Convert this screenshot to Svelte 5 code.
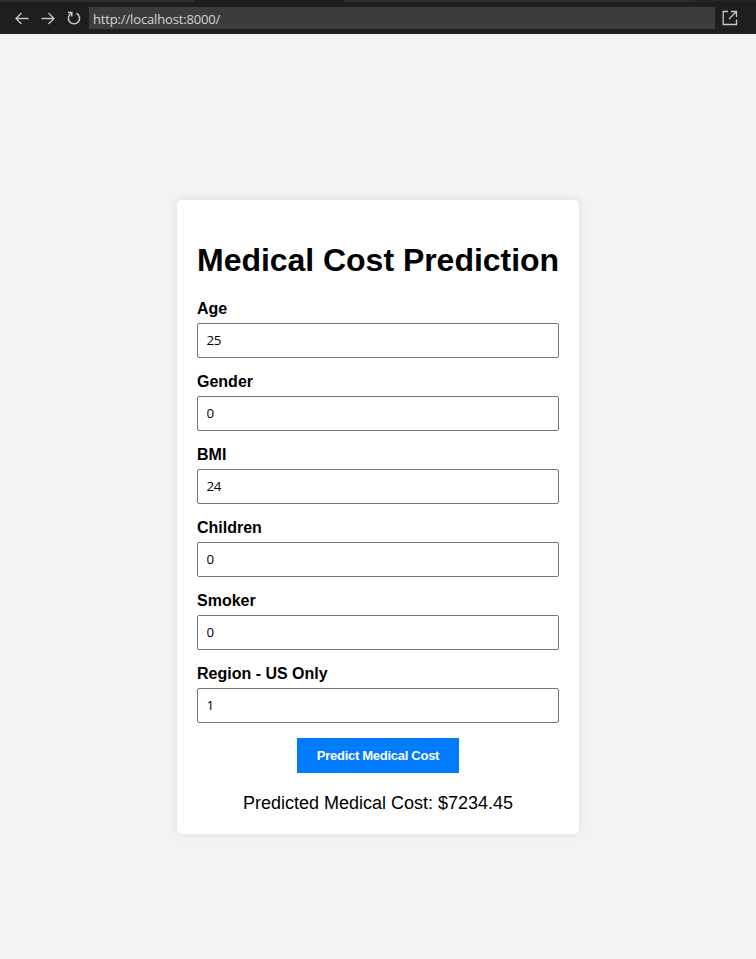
<script>
  let fields = $state([
    { id: 'age', label: 'Age', value: '25' },
    { id: 'gender', label: 'Gender', value: '0' },
    { id: 'bmi', label: 'BMI', value: '24' },
    { id: 'children', label: 'Children', value: '0' },
    { id: 'smoker', label: 'Smoker', value: '0' },
    { id: 'region', label: 'Region - US Only', value: '1' }
  ]);
</script>

<div class="window">
  <div class="tabs"><i class="tab first"></i><i class="tab active"></i><i class="tab wide"></i></div>
  <header>
    <svg class="back" width="14" height="14" viewBox="0 0 14 14"><path d="M13.5 6.5H1M6.5 1L1 6.5L6.5 12" /></svg>
    <svg class="forward" width="14" height="14" viewBox="0 0 14 14"><path d="M0.5 6.5H13M7.5 1L13 6.5L7.5 12" /></svg>
    <svg class="reload" width="14" height="14" viewBox="0 0 14 14"><path d="M1 1.6H4.8V5.4M4.6 2.2A5.6 5.6 0 1 0 9.4 2.2" /></svg>
    <div class="address">http://localhost:8000/</div>
    <svg class="open" width="16" height="16" viewBox="0 0 16 16"><path d="M6 1.5H1.2V14.5H14.5V9.5M9 1.5H14.5V7M14.5 1.5L7 9" /></svg>
  </header>
  <main>
    <section class="card">
      <h1>Medical Cost Prediction</h1>
      <form onsubmit={(e) => e.preventDefault()}>
        {#each fields as field (field.id)}
          <label for={field.id}>{field.label}</label>
          <input id={field.id} type="text" bind:value={field.value} />
        {/each}
        <button type="submit">Predict Medical Cost</button>
      </form>
      <div class="result">Predicted Medical Cost: $7234.45</div>
    </section>
  </main>
</div>

<style>
  :global(body) { margin: 0; background: #f3f3f3; }
  .window {
    height: 959px;
    display: flex;
    flex-direction: column;
    overflow: hidden;
    background: #f3f3f3;
    font-family: "Liberation Sans", Arial, sans-serif;
    color: #000;
  }
  .tabs { display: flex; height: 2px; background: #252526; }
  .tab { background: #2d2d2d; }
  .first { width: 194px; }
  .active { width: 150px; background: #1e1e1e; }
  .wide { width: 350px; }
  header {
    box-sizing: border-box;
    height: 32px;
    padding: 0 18px 0 15px;
    display: flex;
    align-items: center;
    background: #1e1e1e;
  }
  svg { flex: none; fill: none; stroke: #c5c5c5; stroke-width: 1.3; }
  .back { margin-right: 12px; margin-top: 1px; }
  .forward { margin-right: 12px; margin-top: 1px; }
  .reload { margin-right: 8px; stroke-width: 1.5; }
  .open { margin-left: 7px; }
  .address {
    flex: 1;
    box-sizing: border-box;
    height: 22px;
    padding: 0 4px;
    line-height: 24px;
    background: #3c3c3c;
    color: #d4d4d4;
    font-family: "Open Sans", "Noto Sans", sans-serif;
    font-size: 13px;
    letter-spacing: -0.15px;
  }
  main { flex: 1; display: flex; align-items: flex-start; justify-content: center; }
  .card {
    box-sizing: border-box;
    width: 402px;
    height: 634px;
    margin-top: 166px;
    padding: 20px;
    border-radius: 5px;
    background: #fff;
    box-shadow: 0 0 10px rgba(0, 0, 0, 0.1);
  }
  h1 {
    margin: 22px 0 21px;
    font-size: 32px;
    line-height: 37px;
    letter-spacing: -0.03px;
    text-align: center;
    white-space: nowrap;
  }
  form { display: flex; flex-direction: column; }
  label { margin-bottom: 5px; font-size: 16px; font-weight: bold; line-height: 18px; }
  input {
    box-sizing: border-box;
    height: 35px;
    margin: 0 0 15px;
    padding: 7px 8px 9px 8.5px;
    border: 1px solid #767676;
    border-radius: 2px;
    outline: none;
    background: #fff;
    color: #000;
    font: 13.333px "Open Sans", "Noto Sans", sans-serif;
    letter-spacing: -0.4px;
  }
  button {
    align-self: center;
    width: 162px;
    height: 35px;
    padding: 0;
    border: 0;
    background: #007bff;
    color: #fff;
    font: bold 13px "Liberation Sans", Arial, sans-serif;
    letter-spacing: -0.28px;
    white-space: nowrap;
  }
  .result { margin-top: 20px; font-size: 18px; line-height: 21px; text-align: center; }
</style>
